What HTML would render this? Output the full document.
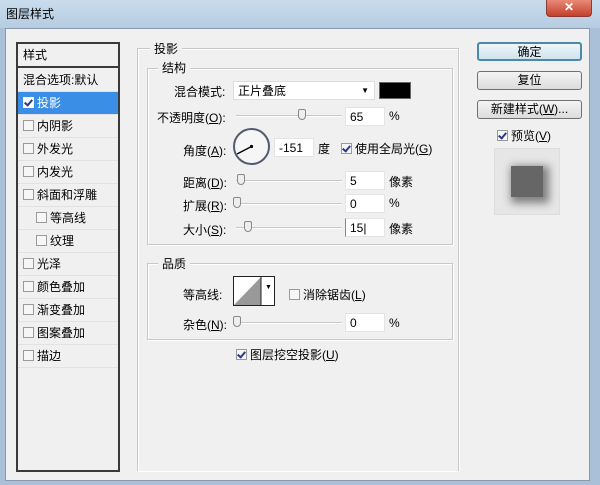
<!DOCTYPE html>
<html><head><meta charset="utf-8"><style>
*{margin:0;padding:0;box-sizing:border-box}
body{width:600px;height:485px;overflow:hidden;background:#a9c0d8;font-family:"Liberation Sans","Noto Sans CJK SC",sans-serif;font-size:12px;color:#000;position:relative}
.a{position:absolute;white-space:nowrap}
.title{left:0;top:0;width:600px;height:28px;background:linear-gradient(#c9dced,#b6cce2)}
.panel{left:5px;top:28px;width:585px;height:453px;background:#f0f0f0;border:1px solid #8a9aaa}
.list{left:16px;top:42px;width:104px;height:430px;border:2px solid #3a3a3a;background:#f0f0f0}
.row{position:absolute;left:0;width:100px;height:23px;line-height:22px;padding-left:5px;border-bottom:1px solid #e2e2e2}
.cb{display:inline-block;width:11px;height:11px;border:1px solid #9a9a9a;background:#f6f6f6;vertical-align:-1px;margin-right:3px;position:relative}
.cb.on::after{content:"";position:absolute;left:2px;top:0px;width:3px;height:6px;border:solid #2a3a8a;border-width:0 2px 2px 0;transform:rotate(40deg)}
.grp{border:1px solid #c8c8c8;box-shadow:1px 1px 0 #fff inset,1px 1px 0 #fff}
.lab{background:#f0f0f0;padding:0 4px}
.inp{background:#fff;border:1px solid #e4e4e4;height:19px;line-height:18px;padding-left:4px}
.track{height:2px;background:#c8c8c8;border-bottom:1px solid #fff}
.th{width:8px;height:11px;border:1px solid #888;border-radius:2px 2px 4px 4px;background:#eee}
.btn{width:105px;height:19px;border:1px solid #707070;border-radius:3px;background:linear-gradient(#f4f4f4,#dcdcdc);text-align:center;line-height:17px}
</style></head><body>
<div class="a title"></div>
<div class="a" style="left:6px;top:5px;font-size:12px">图层样式</div>
<div class="a" style="left:546px;top:0;width:46px;height:17px;background:linear-gradient(#e88a78,#c4402a);border:1px solid #8a3a30;border-top:0;border-radius:0 0 4px 4px;color:#fff;text-align:center;font-weight:bold;line-height:15px">✕</div>
<div class="a panel"></div>

<div class="a list">
 <div class="row" style="top:0;height:24px;border-bottom:2px solid #3a3a3a">样式</div>
 <div class="row" style="top:25px">混合选项:默认</div>
 <div class="row" style="top:48px;background:#3b8ee6;color:#fff"><span class="cb on" style="border-color:#fff;background:#fff"></span>投影</div>
 <div class="row" style="top:71px"><span class="cb"></span>内阴影</div>
 <div class="row" style="top:94px"><span class="cb"></span>外发光</div>
 <div class="row" style="top:117px"><span class="cb"></span>内发光</div>
 <div class="row" style="top:140px"><span class="cb"></span>斜面和浮雕</div>
 <div class="row" style="top:163px;padding-left:18px"><span class="cb"></span>等高线</div>
 <div class="row" style="top:186px;padding-left:18px"><span class="cb"></span>纹理</div>
 <div class="row" style="top:209px"><span class="cb"></span>光泽</div>
 <div class="row" style="top:232px"><span class="cb"></span>颜色叠加</div>
 <div class="row" style="top:255px"><span class="cb"></span>渐变叠加</div>
 <div class="row" style="top:278px"><span class="cb"></span>图案叠加</div>
 <div class="row" style="top:301px"><span class="cb"></span>描边</div>
</div>

<div class="a grp" style="left:137px;top:48px;width:322px;height:423px;border-bottom:0"></div>
<div class="a lab" style="left:150px;top:40px">投影</div>
<div class="a grp" style="left:147px;top:68px;width:306px;height:177px"></div>
<div class="a lab" style="left:158px;top:59px">结构</div>

<div class="a" style="left:174px;top:83px">混合模式:</div>
<div class="a inp" style="left:233px;top:81px;width:142px;border-color:#ddd">正片叠底<span style="position:absolute;right:5px;top:0;font-size:8px">▼</span></div>
<div class="a" style="left:379px;top:82px;width:32px;height:17px;background:#000;border:1px solid #666"></div>

<div class="a" style="left:157px;top:109px">不透明度(<u>O</u>):</div>
<div class="a track" style="left:236px;top:115px;width:106px"></div>
<div class="a th" style="left:298px;top:109px"></div>
<div class="a inp" style="left:345px;top:107px;width:40px">65</div>
<div class="a" style="left:389px;top:109px">%</div>

<div class="a" style="left:183px;top:142px">角度(<u>A</u>):</div>
<div class="a" style="left:233px;top:128px;width:37px;height:37px;border:2px solid #555a70;border-radius:50%;background:#f6f6f6"></div>
<svg class="a" style="left:233px;top:128px" width="37" height="37"><line x1="18.5" y1="18.5" x2="4" y2="26" stroke="#000" stroke-width="1.3"/><circle cx="18.5" cy="18.5" r="1.6"/></svg>
<div class="a inp" style="left:274px;top:138px;width:40px">-151</div>
<div class="a" style="left:318px;top:140px">度</div>
<div class="a" style="left:341px;top:140px"><span class="cb on"></span>使用全局光(<u>G</u>)</div>

<div class="a" style="left:183px;top:174px">距离(<u>D</u>):</div>
<div class="a track" style="left:236px;top:180px;width:106px"></div>
<div class="a th" style="left:237px;top:174px"></div>
<div class="a inp" style="left:345px;top:171px;width:40px">5</div>
<div class="a" style="left:389px;top:173px">像素</div>

<div class="a" style="left:183px;top:197px">扩展(<u>R</u>):</div>
<div class="a track" style="left:236px;top:203px;width:106px"></div>
<div class="a th" style="left:233px;top:197px"></div>
<div class="a inp" style="left:345px;top:194px;width:40px">0</div>
<div class="a" style="left:389px;top:196px">%</div>

<div class="a" style="left:183px;top:221px">大小(<u>S</u>):</div>
<div class="a track" style="left:236px;top:227px;width:106px"></div>
<div class="a th" style="left:244px;top:221px"></div>
<div class="a inp" style="left:345px;top:218px;width:40px;border-left:1px solid #888">15|</div>
<div class="a" style="left:389px;top:220px">像素</div>

<div class="a grp" style="left:147px;top:263px;width:306px;height:77px"></div>
<div class="a lab" style="left:158px;top:255px">品质</div>
<div class="a" style="left:183px;top:286px">等高线:</div>
<div class="a" style="left:233px;top:276px;width:42px;height:30px;border:1px solid #222;background:#fff"></div>
<svg class="a" style="left:234px;top:277px" width="30" height="28"><polygon points="0,28 27,0 27,28" fill="#999"/><line x1="27" y1="0" x2="27" y2="28" stroke="#222"/></svg>
<div class="a" style="left:265px;top:284px;font-size:7px">▼</div>
<div class="a" style="left:289px;top:286px"><span class="cb"></span>消除锯齿(<u>L</u>)</div>
<div class="a" style="left:183px;top:316px">杂色(<u>N</u>):</div>
<div class="a track" style="left:236px;top:322px;width:106px"></div>
<div class="a th" style="left:233px;top:316px"></div>
<div class="a inp" style="left:345px;top:313px;width:40px">0</div>
<div class="a" style="left:389px;top:316px">%</div>

<div class="a" style="left:236px;top:346px"><span class="cb on"></span>图层挖空投影(<u>U</u>)</div>

<div class="a btn" style="left:477px;top:42px;border:2px solid #4a8aa8;background:linear-gradient(#eef6fa,#cfe3ee)">确定</div>
<div class="a btn" style="left:477px;top:71px">复位</div>
<div class="a btn" style="left:477px;top:100px">新建样式(<u>W</u>)...</div>
<div class="a" style="left:497px;top:127px"><span class="cb on"></span>预览(<u>V</u>)</div>
<div class="a" style="left:494px;top:148px;width:66px;height:67px;background:#e6e6e6;border:1px solid #ddd"></div>
<div class="a" style="left:511px;top:166px;width:32px;height:31px;background:#666;box-shadow:3px 3px 8px 3px rgba(0,0,0,.45)"></div>
</body></html>
